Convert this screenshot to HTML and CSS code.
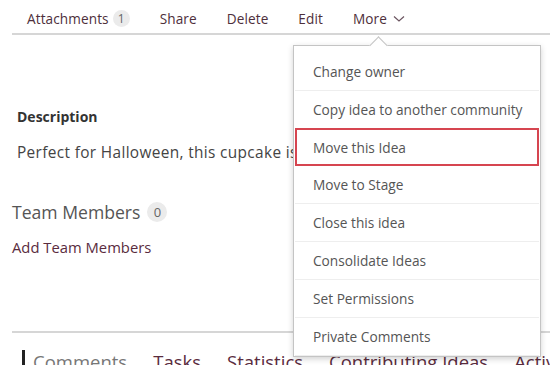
FILE: index.html
```html
<!DOCTYPE html>
<html>
<head>
<meta charset="utf-8">
<link rel="stylesheet" href="styles.css">
</head>
<body>
<div class="page">
  <nav class="topnav">
    <a class="nav-item">Attachments <span class="badge">1</span></a>
    <a class="nav-item">Share</a>
    <a class="nav-item">Delete</a>
    <a class="nav-item">Edit</a>
    <a class="nav-item more">More <svg class="chev" width="12" height="8" viewBox="0 0 12 8"><path d="M1 1.5 L6 6 L11 1.5" fill="none" stroke="#6b5560" stroke-width="1.2"/></svg></a>
  </nav>

  <section class="desc">
    <h3 class="desc-title">Description</h3>
    <p class="desc-text">Perfect for Halloween, this cupcake is a spooky treat for everyone</p>
  </section>

  <h2 class="team-title">Team Members <span class="badge badge-lg">0</span></h2>
  <a class="add-link">Add Team Members</a>

  <div class="tabs">
    <span class="tab active">Comments</span>
    <span class="tab">Tasks</span>
    <span class="tab">Statistics</span>
    <span class="tab">Contributing Ideas</span>
    <span class="tab">Activity</span>
  </div>

  <div class="dropdown">
    <ul class="menu">
      <li class="menu-item">Change owner</li>
      <li class="menu-item">Copy idea to another community</li>
      <li class="menu-item selected">Move this Idea</li>
      <li class="menu-item">Move to Stage</li>
      <li class="menu-item">Close this idea</li>
      <li class="menu-item">Consolidate Ideas</li>
      <li class="menu-item">Set Permissions</li>
      <li class="menu-item">Private Comments</li>
    </ul>
  </div>
</div>
</body>
</html>
```

FILE: styles.css
```css
* { box-sizing: border-box; }
html, body { margin: 0; padding: 0; background: #fff; }
body { font-family: "Open Sans", "Liberation Sans", sans-serif; color: #444; }

.page {
  position: relative;
  width: 550px;
  height: 365px;
  overflow: hidden;
  padding-left: 12px;
}

.topnav {
  display: flex;
  align-items: center;
  gap: 30px;
  height: 35px;
  padding: 4px 0 0 15px;
  border-bottom: 2px solid #d6d6d6;
}
.nav-item {
  font-size: 13.6px;
  line-height: 18px;
  letter-spacing: 0.1px;
  color: #4e2f3b;
  display: flex;
  align-items: center;
  gap: 4px;
  white-space: nowrap;
}
.more .chev { margin-left: 2px; }

.badge {
  display: inline-flex;
  align-items: center;
  justify-content: center;
  width: 17px;
  height: 17px;
  border-radius: 50%;
  background: #ebebeb;
  color: #666;
  font-size: 12px;
  font-weight: normal;
  letter-spacing: 0;
}
.badge-lg {
  width: 20px;
  height: 20px;
  font-size: 13px;
  margin-left: 2px;
}

.desc { padding-left: 5px; }
.desc-title {
  margin: 73px 0 0;
  font-size: 14px;
  line-height: 18px;
  font-weight: 700;
  color: #333;
}
.desc-text {
  margin: 17px 0 0;
  font-size: 15.4px;
  line-height: 20px;
  letter-spacing: 0.35px;
  color: #444;
  white-space: nowrap;
}

.team-title {
  margin: 38px 0 0;
  font-size: 17.6px;
  line-height: 22px;
  font-weight: 400;
  color: #555;
  display: flex;
  align-items: center;
  gap: 5px;
}
.add-link {
  display: block;
  margin-top: 14px;
  font-size: 14.8px;
  line-height: 20px;
  color: #5a2c3e;
}

.tabs {
  margin-top: 74px;
  border-top: 2px solid #d6d6d6;
  padding: 17px 0 0 10px;
  display: flex;
  gap: 26px;
  white-space: nowrap;
}
.tab {
  font-size: 18.5px;
  line-height: 24px;
  color: #5a2c3e;
}
.tab.active {
  color: #777;
  border-left: 3px solid #222;
  padding-left: 8px;
}

.dropdown {
  position: absolute;
  left: 293px;
  top: 45px;
  width: 248px;
  background: #fff;
  border: 1px solid #c4c4c4;
  box-shadow: 0 2px 6px rgba(0,0,0,0.18);
  padding-top: 7px;
}
.dropdown::before {
  content: "";
  position: absolute;
  top: -7px;
  left: 78px;
  width: 12px;
  height: 12px;
  background: #fff;
  border-top: 1px solid #c4c4c4;
  border-left: 1px solid #c4c4c4;
  transform: rotate(45deg);
}
.menu {
  list-style: none;
  margin: 0;
  padding: 0;
}
.menu-item {
  height: 38px;
  display: flex;
  align-items: center;
  padding-left: 18px;
  font-size: 13.7px;
  color: #555;
  border-bottom: 1px solid #eeeeee;
  margin: 0 1px;
}
.menu-item.selected {
  border: 2px solid #d64550;
  padding-left: 16px;
  margin-top: -1px;
}
```
